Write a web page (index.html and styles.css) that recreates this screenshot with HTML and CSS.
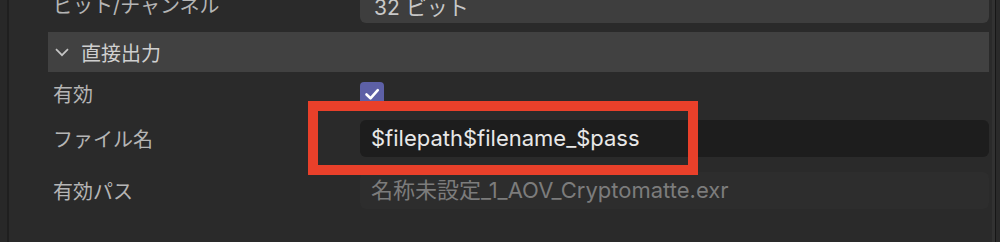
FILE: index.html
```html
<!DOCTYPE html>
<html lang="ja">
<head>
    <meta charset="UTF-8">
    <title>直接出力</title>
    <link rel="stylesheet" href="styles.css">
</head>
<body>
    <div class="panel">
        <div class="inner">
            <!-- 上の行 (途中で切れている) -->
            <div class="row row-top">
                <div class="label">ビット/チャンネル</div>
                <div class="dropdown">
                    <span>32 ビット</span>
                    <span class="arrow"></span>
                </div>
            </div>

            <!-- セクション見出し -->
            <div class="section">
                <svg class="chevron" width="14" height="9" viewBox="0 0 14 9">
                    <path d="M1 1.2 L7 7.2 L13 1.2" fill="none" stroke="#c4c4c4" stroke-width="1.7"/>
                </svg>
                <span>直接出力</span>
            </div>

            <div class="row row-check">
                <div class="label">有効</div>
                <div class="field-slot">
                    <span class="checkbox">
                        <svg width="24" height="24" viewBox="0 0 24 24">
                            <path d="M6.5 12.5 L10.5 16.3 L17.8 8.2" fill="none" stroke="#fff" stroke-width="2.6" stroke-linecap="round" stroke-linejoin="round"/>
                        </svg>
                    </span>
                </div>
            </div>

            <div class="row row-name">
                <div class="label">ファイル名</div>
                <div class="input">$filepath$filename_$pass</div>
            </div>

            <div class="row row-path">
                <div class="label">有効パス</div>
                <div class="input readonly">名称未設定_1_AOV_Cryptomatte.exr</div>
            </div>
        </div>
        <div class="edge"></div>
    </div>

    <!-- 注釈の赤枠 -->
    <div class="mark"></div>
</body>
</html>
```

FILE: styles.css
```css
html, body { margin: 0; padding: 0; }
body {
    width: 1000px;
    height: 242px;
    overflow: hidden;
    background: #282828;
    font-family: Inter, "Noto Sans CJK JP", sans-serif;
    font-size: 20px;
    color: #b5b5b5;
    position: relative;
}

.panel {
    display: flex;
    height: 242px;
    margin-left: 7px;
    border-left: 2px solid #1f1f1f;
    background: #2a2a2a;
}
.inner {
    width: 941px;
    padding-left: 39px;
    margin-top: -14px;
}
.edge {
    width: 3px;
    margin-left: 3px;
    border-right: 1px solid #161616;
    background: #323232;
}

.row { display: flex; align-items: center; }
.label { width: 307px; padding-left: 5px; flex: none; }
.field-slot { flex: 1; }

.row-top { height: 37px; }
.dropdown {
    flex: 1;
    height: 37px;
    background: #3e3e3e;
    border-radius: 6px;
    display: flex;
    align-items: center;
    justify-content: space-between;
    padding: 0 12px 0 14px;
    color: #c8c8c8;
    font-size: 21px;
}
.dropdown span:first-child { margin-top: 2px; }
.arrow {
    width: 0;
    height: 0;
    border-left: 8px solid transparent;
    border-right: 8px solid transparent;
    border-top: 8px solid #a9a9a9;
    margin-top: -24px;
}

.section {
    margin-top: 9px;
    height: 40px;
    background: #414141;
    display: flex;
    align-items: center;
    color: #cfcfcf;
}
.chevron { margin-left: 7px; margin-right: 12px; margin-top: 1px; }

.row-check { height: 36px; margin-top: 4px; }
.row-check .label { margin-top: -2px; }
.checkbox {
    display: block;
    width: 24px;
    height: 24px;
    border-radius: 4px;
    background: #5d60a6;
}
.checkbox svg { display: block; }

.row-name { margin-top: 8px; }
.row-path { margin-top: 15px; }
.input {
    flex: 1;
    height: 37px;
    line-height: 37px;
    border-radius: 6px;
    background: #1d1d1d;
    padding-left: 11px;
    color: #e8e8e8;
    font-size: 22px;
}
.input.readonly { background: #2d2d2d; color: #7c7c7c; }

.mark {
    position: absolute;
    left: 308px;
    top: 101px;
    width: 370px;
    height: 54px;
    border: 10px solid #e9402a;
}
```
